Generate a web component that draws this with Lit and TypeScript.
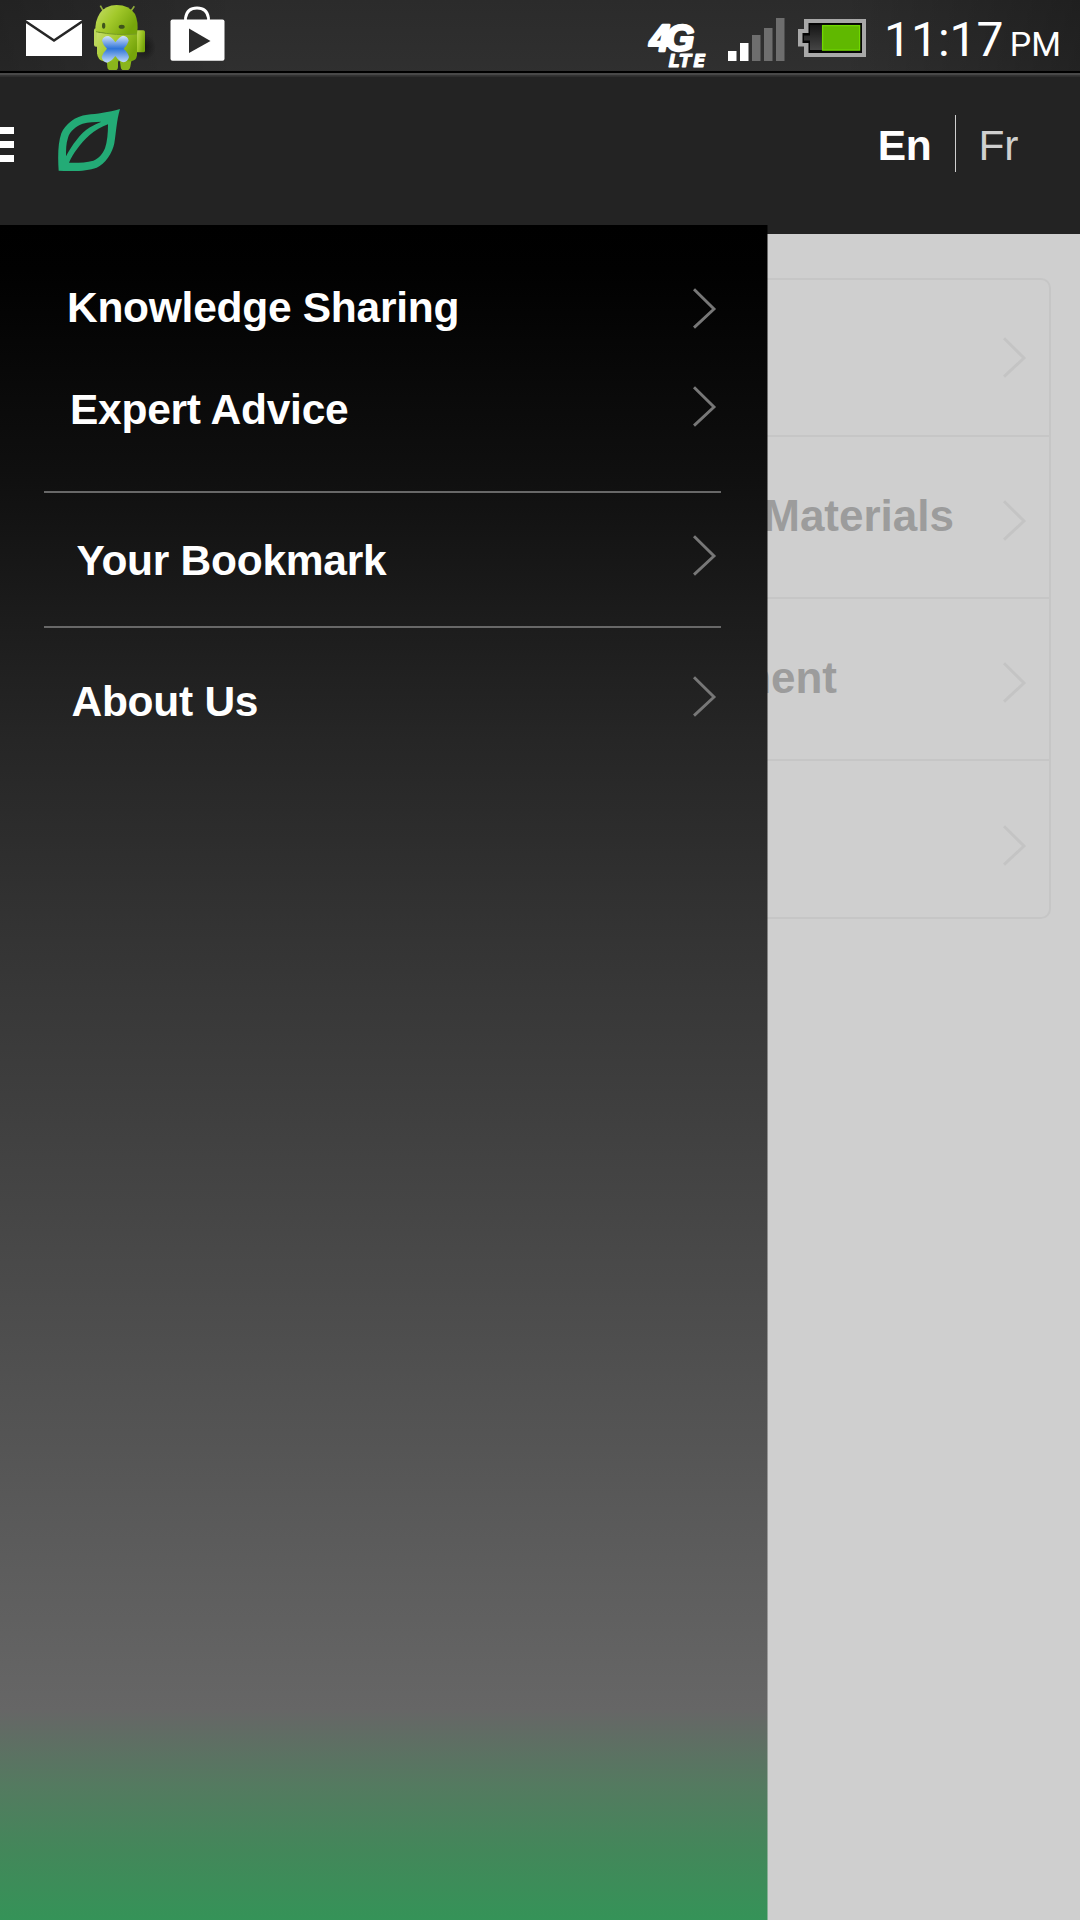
import { LitElement, html, css } from "lit";
import { customElement, property } from "lit/decorators.js";

@customElement("chevron-icon")
class ChevronIcon extends LitElement {
  static styles = css`
    :host { display: block; flex: none; width: 25px; height: 42px; }
    .icon { display: block; }
  `;
  render() {
    return html`<svg class="icon" width="25" height="42" viewBox="0 0 25 42" fill="none" stroke="currentColor" stroke-width="2.9">
      <path d="M2 1.3 L22 21 L2 39.6" />
    </svg>`;
  }
}

@customElement("status-bar")
class StatusBar extends LitElement {
  @property() time = "11:17";
  @property() period = "PM";

  static styles = css`
    :host {
      display: flex;
      box-sizing: border-box;
      height: 77px;
      padding: 0 19px 6px 26px;
      color: #fff;
      font-family: Roboto, sans-serif;
      background:
        linear-gradient(#000 0 2px, #484848 2px 4px, #333 4px 5px, #282828 6px) 0 71px / 100% 6px no-repeat,
        linear-gradient(90deg, rgba(0,0,0,.22), transparent 22%, transparent 78%, rgba(0,0,0,.28)),
        linear-gradient(#2b2b2b, #303030);
    }
    .icon { display: block; flex: none; overflow: visible; }
    .mail { margin-top: 19px; }
    .droid { margin-left: 12px; margin-top: 4px; }
    .bag { margin-left: 24px; margin-top: 5px; }
    .network { margin-left: auto; margin-top: 20px; }
    .signal { margin-left: 20px; margin-top: 18px; }
    .battery { margin-left: 14px; margin-top: 18px; }
    .clock { display: flex; align-items: baseline; width: 177px; margin-left: 18px; white-space: nowrap; }
    .time { font-size: 48px; line-height: 79px; width: 126px; }
    .period { font-size: 34px; }
    .net { font-weight: bold; font-style: italic; fill: #fff; stroke: #fff; stroke-linejoin: round; }
    .large { font-family: "Liberation Sans", Arial, sans-serif; font-size: 37px; stroke-width: 2.4px; letter-spacing: -4.5px; }
    .small { font-family: "DejaVu Sans", sans-serif; font-size: 18px; stroke-width: .9px; letter-spacing: 2px; }
  `;

  render() {
    return html`
      <svg class="icon mail" width="56" height="37" viewBox="0 0 56 37">
        <rect y="1" width="56" height="36" fill="#fff" />
        <path d="M-1 2 L28 21.5 L57 2" fill="none" stroke="#262626" stroke-width="2.6" />
      </svg>
      <svg class="icon droid" width="52" height="66" viewBox="282 12 156 198">
        <defs>
          <linearGradient id="green" x1="0" y1="0" x2="1" y2=".5">
            <stop offset="0" stop-color="#c6dd6a" /><stop offset=".5" stop-color="#a3c92b" /><stop offset="1" stop-color="#76a50b" />
          </linearGradient>
          <linearGradient id="blue" x1="0" y1="0" x2="0" y2="1">
            <stop offset="0" stop-color="#d7e6fb" /><stop offset=".48" stop-color="#2f74d8" /><stop offset="1" stop-color="#c2dcf8" />
          </linearGradient>
          <radialGradient id="shade"><stop offset="0" stop-color="#000" stop-opacity=".5" /><stop offset="1" stop-color="#000" stop-opacity="0" /></radialGradient>
        </defs>
        <ellipse cx="432" cy="142" rx="36" ry="40" fill="url(#shade)" />
        <path d="M301 17 L309 31 M403 19 L393 33" stroke="#8fab3c" stroke-width="5" />
        <rect x="282" y="85" width="14" height="55" rx="6" fill="#bcd75b" />
        <rect x="407" y="91" width="28" height="66" rx="5" fill="url(#green)" />
        <path d="M320 178 h34 v22 q0 10 -8 10 h-14 q-10 0 -10 -10z M359 178 h36 l-4 22 q-2 10 -10 10 h-10 q-8 0 -9 -10z" fill="#8ab51c" />
        <path d="M291 98 H411 V166 Q409 182 393 184 H310 Q293 180 291 160Z" fill="url(#green)" />
        <path d="M287 95 Q283 65 300 39 Q316 16 350 15 Q387 15 405 42 Q417 68 411 102 Q350 106 287 95Z" fill="url(#green)" />
        <path d="M288 95 Q350 108 411 102" fill="none" stroke="#779d25" stroke-width="3" />
        <ellipse cx="311" cy="77" rx="5" ry="9" fill="#3f541c" />
        <ellipse cx="365" cy="80" rx="9" ry="6" fill="#3f541c" />
        <path d="M306 122 Q309 108 325 108 Q335 110 346 127 Q357 110 369 107 Q384 108 386 122 Q383 134 371 146 Q385 159 387 171 Q383 186 371 187 Q358 185 346 168 Q334 185 321 188 Q307 185 305 171 Q308 159 321 146 Q309 135 306 122Z" fill="url(#blue)" />
      </svg>
      <svg class="icon bag" width="54" height="56" viewBox="0 0 54 56">
        <path d="M15.5 16 V13 Q17 3 27 3 Q37 3 38.5 13 V16" fill="none" stroke="#fff" stroke-width="2.8" />
        <rect x=".5" y="14.5" width="54" height="41.3" rx="2" fill="#fff" />
        <path d="M19 23.5 L40.5 36 L19 48Z" fill="#2a2a2a" />
      </svg>
      <svg class="icon network" width="60" height="50" viewBox="0 0 60 50">
        <text class="net"><tspan class="large" x="1.5" y="31">4G</tspan><tspan class="small" x="20.5" y="46.7">LTE</tspan></text>
      </svg>
      <svg class="icon signal" width="56" height="43" viewBox="0 0 56 43">
        <path fill="#fff" d="M0 33h8.5v10H0z M12 25h8.5v18H12z" />
        <path fill="#6e6e6e" d="M24 17h8.5v26H24z M36 10h8.5v33H36z M48 0h8.5v43H48z" />
      </svg>
      <svg class="icon battery" width="68" height="39" viewBox="0 0 68 39">
        <defs>
          <linearGradient id="cell" x1="0" y1="0" x2="0" y2="1"><stop offset="0" stop-color="#161616" /><stop offset="1" stop-color="#454545" /></linearGradient>
        </defs>
        <path d="M6 1 H68 V39 H6 V28.5 H0 V11 H6Z" fill="#a8a8a8" />
        <path d="M10.5 5 H64 V35 H10.5 V25 H4.5 V15 H10.5Z" fill="#050505" />
        <path d="M12 7 H25 V32 H12 V22.5 H6 V17.5 H12Z" fill="url(#cell)" />
        <rect x="24.6" y="7.6" width="37" height="24.5" fill="#60b800" stroke="#72d800" stroke-width="1.3" />
      </svg>
      <div class="clock"><span class="time">${this.time}</span><span class="period">${this.period}</span></div>
    `;
  }
}

@customElement("app-header")
class AppHeader extends LitElement {
  static styles = css`
    :host {
      display: flex;
      box-sizing: border-box;
      height: 157px;
      background: #232323;
      font: 42.5px/48px "Liberation Sans", Arial, sans-serif;
      letter-spacing: -0.3px;
    }
    .menu { width: 14px; margin-top: 50px; display: flex; flex-direction: column; gap: 7px; }
    .line { height: 7px; background: #fff; }
    .leaf { display: block; margin: 29px 0 0 42px; }
    .languages { display: flex; margin: 38px 62px 0 auto; height: 57px; }
    .lang { padding-top: 7px; box-sizing: border-box; color: #cfcfcf; }
    .active { color: #fff; font-weight: bold; }
    .rule { width: 1px; margin: 0 22px 0 24px; background: #cfcfcf; }
  `;
  render() {
    return html`
      <div class="menu"><div class="line"></div><div class="line"></div><div class="line"></div></div>
      <svg class="leaf" width="65" height="65" viewBox="168 108 195 195">
        <path fill="#23ab76" fill-rule="evenodd" d="M360 117 C325 127 290 132 262 134 C225 138 195 163 184 190 C174 218 173 260 176 302 C215 304 262 304 290 293 C315 283 338 248 343 220 C348 190 350 150 360 117Z
          M304 155 C285 156 265 156 248 161 C228 168 210 183 204 203 C198 220 198 240 198 259 C215 228 240 190 270 172 C282 165 293 160 304 155Z
          M324 163 C324 190 322 215 315 235 C308 252 297 266 280 272 C255 279 230 278 207 278 C220 250 240 222 268 196 C285 181 305 170 324 163Z" />
      </svg>
      <div class="languages">
        <div class="lang active">En</div><div class="rule"></div><div class="lang">Fr</div>
      </div>
    `;
  }
}

@customElement("topic-list")
class TopicList extends LitElement {
  static styles = css`
    :host { display: block; padding: 44px 29px 0; font: bold 44px/50px "Liberation Sans", Arial, sans-serif; color: #9c9c9c; }
    .card { border: 2px solid #c6c6c6; border-radius: 10px; }
    .row { display: flex; justify-content: flex-end; align-items: center; box-sizing: border-box; height: 162px; padding-right: 22px; border-bottom: 2px solid #c6c6c6; }
    .row:first-child { height: 157px; }
    .row:last-child { height: 156px; border-bottom: 0; }
    .label { margin-bottom: 2px; }
    .materials { margin-right: 48px; }
    .ment { margin-right: 165px; }
    .arrow { color: #c4c4c4; margin-top: 8px; }
    .row:first-child .arrow { margin-top: 1px; }
    .row:last-child .arrow { margin-top: 13px; }
  `;
  render() {
    return html`<div class="card">
      <div class="row"><chevron-icon class="arrow"></chevron-icon></div>
      <div class="row"><span class="label materials">Materials</span><chevron-icon class="arrow"></chevron-icon></div>
      <div class="row"><span class="label ment">ment</span><chevron-icon class="arrow"></chevron-icon></div>
      <div class="row"><chevron-icon class="arrow"></chevron-icon></div>
    </div>`;
  }
}

@customElement("side-drawer")
class SideDrawer extends LitElement {
  static styles = css`
    :host {
      --fade: linear-gradient(#000 0, #010101 45px, #0f0f0f 245px, #1c1c1c 395px, #262626 515px, #343434 715px, #666 1485px, #547a60 1560px, #43875a 1625px, #359358 1695px);
      box-sizing: border-box;
      padding-top: 32px;
      background: var(--fade);
      color: #fff;
      font: bold 42.5px/48px "Liberation Sans", Arial, sans-serif;
      letter-spacing: -0.27px;
    }
    :host::after { content: ""; position: absolute; top: 0; left: 100%; width: 1px; height: 100%; background: var(--fade); opacity: .5; }
    .item { display: flex; justify-content: space-between; align-items: center; box-sizing: border-box; padding-right: 50px; }
    .divider { height: 2px; margin: 0 46px 0 44px; background: #686868; }
    .arrow { color: #777; }
    .sharing { height: 101px; padding-left: 67px; }
    .sharing .arrow { margin-top: 3px; }
    .advice { height: 103px; padding-left: 70px; margin-bottom: 30px; }
    .advice .arrow { margin-bottom: 5px; }
    .bookmark { height: 133px; padding-left: 76.5px; padding-top: 2px; }
    .bookmark .arrow { margin-bottom: 10px; }
    .about { height: 147px; padding-left: 71.5px; }
    .about .arrow { margin-bottom: 9px; }
  `;
  render() {
    const item = (name: string, label: string) => html`<div class="item ${name}"><span>${label}</span><chevron-icon class="arrow"></chevron-icon></div>`;
    return html`
      ${item("sharing", "Knowledge Sharing")}
      ${item("advice", "Expert Advice")}
      <div class="divider"></div>
      ${item("bookmark", "Your Bookmark")}
      <div class="divider"></div>
      ${item("about", "About Us")}
    `;
  }
}

@customElement("app-root")
class AppRoot extends LitElement {
  static styles = css`
    :host { display: block; position: relative; width: 1080px; height: 1920px; overflow: hidden; background: #cfcfcf; }
    .drawer { display: block; position: absolute; left: 0; top: 225px; bottom: 0; width: 767px; }
  `;
  render() {
    return html`
      <status-bar></status-bar>
      <app-header></app-header>
      <topic-list></topic-list>
      <side-drawer class="drawer"></side-drawer>
    `;
  }
}
